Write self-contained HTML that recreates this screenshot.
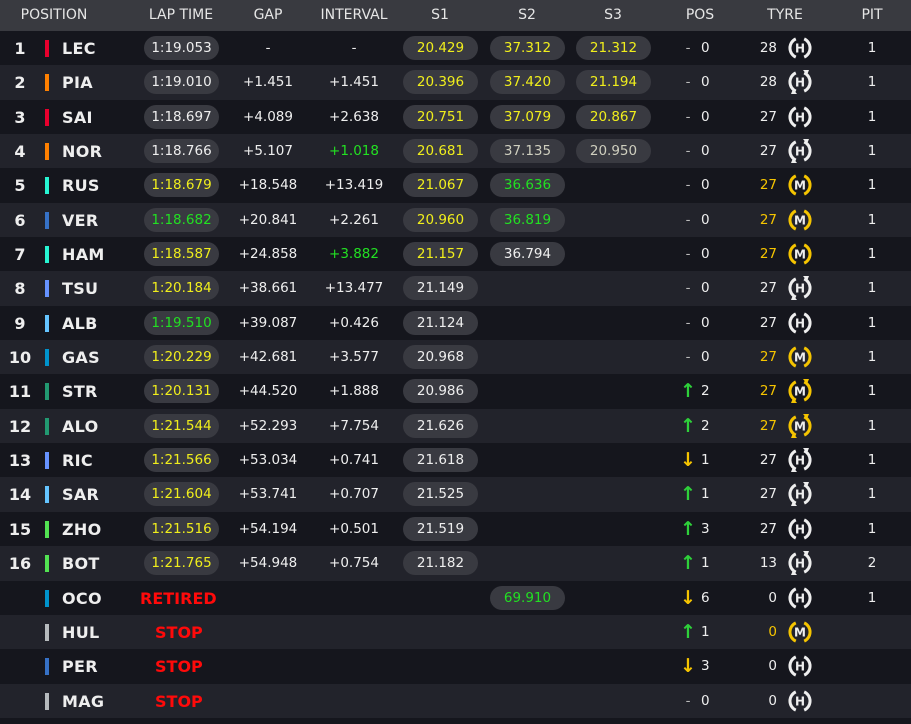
<!DOCTYPE html>
<html><head><meta charset="utf-8"><style>
*{margin:0;padding:0;box-sizing:border-box}
body{width:911px;height:724px;background:#15161d;font-family:"DejaVu Sans","Liberation Sans",sans-serif;color:#eee;overflow:hidden;position:relative}
.h{height:31px;background:#393a40;position:relative;font-size:14px;color:#e6e6e6}
.h span{position:absolute;top:0;line-height:30px;text-align:center}
.r{height:34.35px;position:relative;font-size:13.5px}
.r:nth-child(even){background:#22232b}
.r:nth-child(odd){background:#15161d}
.r span{position:absolute;top:0;line-height:35px;white-space:nowrap}
.n{left:0;width:40px;text-align:center;font-weight:bold;font-size:16px}
.r span.b{left:45px;top:9px;width:4px;height:17px;line-height:0}
.c{left:62px;font-weight:bold;font-size:16px;letter-spacing:.3px}
.r span.p{top:5px;height:24px;line-height:24px;width:75px;border-radius:12px;background:#393a41;text-align:center}
.l{left:144px}.s1{left:403px}.s2{left:490px}.s3{left:576px}
.g{left:228px;width:80px;text-align:center}
.i{left:314px;width:80px;text-align:center}
.pd{left:680px;width:16px;text-align:center;color:#bbb}
.pn{left:701px}
.tn{left:740px;width:37px;text-align:right}
.pt{left:852px;width:40px;text-align:center}
.r svg{position:absolute;left:788px;top:5px;width:24px;height:24px}
.y{color:#f0ee1c}.gr{color:#22e022}.gy{color:#cfcfbf}.ty{color:#f5c400}
.r span.up{color:#2ed03a;font-weight:bold;font-size:19px}.r span.dn{color:#f5c400;font-weight:bold;font-size:19px}
.rt{left:140px;color:#ff0a0a;font-weight:bold;font-size:16px}
.st{left:155px;color:#ff0a0a;font-weight:bold;font-size:16px}
</style></head><body>
<div class="h"><span style="left:0;width:108px">POSITION</span><span style="left:141px;width:80px">LAP TIME</span><span style="left:238px;width:60px">GAP</span><span style="left:309px;width:90px">INTERVAL</span><span style="left:420px;width:40px">S1</span><span style="left:507px;width:40px">S2</span><span style="left:593px;width:40px">S3</span><span style="left:680px;width:40px">POS</span><span style="left:760px;width:50px">TYRE</span><span style="left:852px;width:40px">PIT</span></div>
<div id="rows">
<div class="r"><span class="n">1</span><span class="b" style="background:#e8002d"></span><span class="c">LEC</span><span class="p l">1:19.053</span><span class="g">-</span><span class="i">-</span><span class="p s1 y">20.429</span><span class="p s2 y">37.312</span><span class="p s3 y">21.312</span><span class="pd">-</span><span class="pn">0</span><span class="tn">28</span><svg viewBox="0 0 24 24"><path d="M7.8 2.9A10 10 0 0 0 7.8 21.1M16.2 2.9A10 10 0 0 1 16.2 21.1" fill="none" stroke="#eee" stroke-width="3"/><text x="12" y="16.4" font-size="12" font-weight="bold" fill="#eee" text-anchor="middle" font-family="DejaVu Sans">H</text></svg><span class="pt">1</span></div>
<div class="r"><span class="n">2</span><span class="b" style="background:#ff8000"></span><span class="c">PIA</span><span class="p l">1:19.010</span><span class="g">+1.451</span><span class="i">+1.451</span><span class="p s1 y">20.396</span><span class="p s2 y">37.420</span><span class="p s3 y">21.194</span><span class="pd">-</span><span class="pn">0</span><span class="tn">28</span><svg viewBox="0 0 24 24"><path d="M7.8 2.9A10 10 0 0 0 7.8 21.1M16.2 2.9A10 10 0 0 1 16.2 21.1" fill="none" stroke="#eee" stroke-width="3"/><path d="M15 0h6l-2 5zM9 24H3l2-5z" fill="#eee"/><text x="12" y="16.4" font-size="12" font-weight="bold" fill="#eee" text-anchor="middle" font-family="DejaVu Sans">H</text></svg><span class="pt">1</span></div>
<div class="r"><span class="n">3</span><span class="b" style="background:#e8002d"></span><span class="c">SAI</span><span class="p l">1:18.697</span><span class="g">+4.089</span><span class="i">+2.638</span><span class="p s1 y">20.751</span><span class="p s2 y">37.079</span><span class="p s3 y">20.867</span><span class="pd">-</span><span class="pn">0</span><span class="tn">27</span><svg viewBox="0 0 24 24"><path d="M7.8 2.9A10 10 0 0 0 7.8 21.1M16.2 2.9A10 10 0 0 1 16.2 21.1" fill="none" stroke="#eee" stroke-width="3"/><text x="12" y="16.4" font-size="12" font-weight="bold" fill="#eee" text-anchor="middle" font-family="DejaVu Sans">H</text></svg><span class="pt">1</span></div>
<div class="r"><span class="n">4</span><span class="b" style="background:#ff8000"></span><span class="c">NOR</span><span class="p l">1:18.766</span><span class="g">+5.107</span><span class="i gr">+1.018</span><span class="p s1 y">20.681</span><span class="p s2 gy">37.135</span><span class="p s3 gy">20.950</span><span class="pd">-</span><span class="pn">0</span><span class="tn">27</span><svg viewBox="0 0 24 24"><path d="M7.8 2.9A10 10 0 0 0 7.8 21.1M16.2 2.9A10 10 0 0 1 16.2 21.1" fill="none" stroke="#eee" stroke-width="3"/><path d="M15 0h6l-2 5zM9 24H3l2-5z" fill="#eee"/><text x="12" y="16.4" font-size="12" font-weight="bold" fill="#eee" text-anchor="middle" font-family="DejaVu Sans">H</text></svg><span class="pt">1</span></div>
<div class="r"><span class="n">5</span><span class="b" style="background:#27f4d2"></span><span class="c">RUS</span><span class="p l y">1:18.679</span><span class="g">+18.548</span><span class="i">+13.419</span><span class="p s1 y">21.067</span><span class="p s2 gr">36.636</span><span class="pd">-</span><span class="pn">0</span><span class="tn ty">27</span><svg viewBox="0 0 24 24"><path d="M7.8 2.9A10 10 0 0 0 7.8 21.1M16.2 2.9A10 10 0 0 1 16.2 21.1" fill="none" stroke="#f5c400" stroke-width="3"/><text x="12" y="16.4" font-size="12" font-weight="bold" fill="#eee" text-anchor="middle" font-family="DejaVu Sans">M</text></svg><span class="pt">1</span></div>
<div class="r"><span class="n">6</span><span class="b" style="background:#3671c6"></span><span class="c">VER</span><span class="p l gr">1:18.682</span><span class="g">+20.841</span><span class="i">+2.261</span><span class="p s1 y">20.960</span><span class="p s2 gr">36.819</span><span class="pd">-</span><span class="pn">0</span><span class="tn ty">27</span><svg viewBox="0 0 24 24"><path d="M7.8 2.9A10 10 0 0 0 7.8 21.1M16.2 2.9A10 10 0 0 1 16.2 21.1" fill="none" stroke="#f5c400" stroke-width="3"/><text x="12" y="16.4" font-size="12" font-weight="bold" fill="#eee" text-anchor="middle" font-family="DejaVu Sans">M</text></svg><span class="pt">1</span></div>
<div class="r"><span class="n">7</span><span class="b" style="background:#27f4d2"></span><span class="c">HAM</span><span class="p l y">1:18.587</span><span class="g">+24.858</span><span class="i gr">+3.882</span><span class="p s1 y">21.157</span><span class="p s2">36.794</span><span class="pd">-</span><span class="pn">0</span><span class="tn ty">27</span><svg viewBox="0 0 24 24"><path d="M7.8 2.9A10 10 0 0 0 7.8 21.1M16.2 2.9A10 10 0 0 1 16.2 21.1" fill="none" stroke="#f5c400" stroke-width="3"/><text x="12" y="16.4" font-size="12" font-weight="bold" fill="#eee" text-anchor="middle" font-family="DejaVu Sans">M</text></svg><span class="pt">1</span></div>
<div class="r"><span class="n">8</span><span class="b" style="background:#6692ff"></span><span class="c">TSU</span><span class="p l y">1:20.184</span><span class="g">+38.661</span><span class="i">+13.477</span><span class="p s1">21.149</span><span class="pd">-</span><span class="pn">0</span><span class="tn">27</span><svg viewBox="0 0 24 24"><path d="M7.8 2.9A10 10 0 0 0 7.8 21.1M16.2 2.9A10 10 0 0 1 16.2 21.1" fill="none" stroke="#eee" stroke-width="3"/><path d="M15 0h6l-2 5zM9 24H3l2-5z" fill="#eee"/><text x="12" y="16.4" font-size="12" font-weight="bold" fill="#eee" text-anchor="middle" font-family="DejaVu Sans">H</text></svg><span class="pt">1</span></div>
<div class="r"><span class="n">9</span><span class="b" style="background:#64c4ff"></span><span class="c">ALB</span><span class="p l gr">1:19.510</span><span class="g">+39.087</span><span class="i">+0.426</span><span class="p s1">21.124</span><span class="pd">-</span><span class="pn">0</span><span class="tn">27</span><svg viewBox="0 0 24 24"><path d="M7.8 2.9A10 10 0 0 0 7.8 21.1M16.2 2.9A10 10 0 0 1 16.2 21.1" fill="none" stroke="#eee" stroke-width="3"/><text x="12" y="16.4" font-size="12" font-weight="bold" fill="#eee" text-anchor="middle" font-family="DejaVu Sans">H</text></svg><span class="pt">1</span></div>
<div class="r"><span class="n">10</span><span class="b" style="background:#0093cc"></span><span class="c">GAS</span><span class="p l y">1:20.229</span><span class="g">+42.681</span><span class="i">+3.577</span><span class="p s1">20.968</span><span class="pd">-</span><span class="pn">0</span><span class="tn ty">27</span><svg viewBox="0 0 24 24"><path d="M7.8 2.9A10 10 0 0 0 7.8 21.1M16.2 2.9A10 10 0 0 1 16.2 21.1" fill="none" stroke="#f5c400" stroke-width="3"/><text x="12" y="16.4" font-size="12" font-weight="bold" fill="#eee" text-anchor="middle" font-family="DejaVu Sans">M</text></svg><span class="pt">1</span></div>
<div class="r"><span class="n">11</span><span class="b" style="background:#229971"></span><span class="c">STR</span><span class="p l y">1:20.131</span><span class="g">+44.520</span><span class="i">+1.888</span><span class="p s1">20.986</span><span class="pd up">↑</span><span class="pn">2</span><span class="tn ty">27</span><svg viewBox="0 0 24 24"><path d="M7.8 2.9A10 10 0 0 0 7.8 21.1M16.2 2.9A10 10 0 0 1 16.2 21.1" fill="none" stroke="#f5c400" stroke-width="3"/><path d="M15 0h6l-2 5zM9 24H3l2-5z" fill="#f5c400"/><text x="12" y="16.4" font-size="12" font-weight="bold" fill="#eee" text-anchor="middle" font-family="DejaVu Sans">M</text></svg><span class="pt">1</span></div>
<div class="r"><span class="n">12</span><span class="b" style="background:#229971"></span><span class="c">ALO</span><span class="p l y">1:21.544</span><span class="g">+52.293</span><span class="i">+7.754</span><span class="p s1">21.626</span><span class="pd up">↑</span><span class="pn">2</span><span class="tn ty">27</span><svg viewBox="0 0 24 24"><path d="M7.8 2.9A10 10 0 0 0 7.8 21.1M16.2 2.9A10 10 0 0 1 16.2 21.1" fill="none" stroke="#f5c400" stroke-width="3"/><path d="M15 0h6l-2 5zM9 24H3l2-5z" fill="#f5c400"/><text x="12" y="16.4" font-size="12" font-weight="bold" fill="#eee" text-anchor="middle" font-family="DejaVu Sans">M</text></svg><span class="pt">1</span></div>
<div class="r"><span class="n">13</span><span class="b" style="background:#6692ff"></span><span class="c">RIC</span><span class="p l y">1:21.566</span><span class="g">+53.034</span><span class="i">+0.741</span><span class="p s1">21.618</span><span class="pd dn">↓</span><span class="pn">1</span><span class="tn">27</span><svg viewBox="0 0 24 24"><path d="M7.8 2.9A10 10 0 0 0 7.8 21.1M16.2 2.9A10 10 0 0 1 16.2 21.1" fill="none" stroke="#eee" stroke-width="3"/><path d="M15 0h6l-2 5zM9 24H3l2-5z" fill="#eee"/><text x="12" y="16.4" font-size="12" font-weight="bold" fill="#eee" text-anchor="middle" font-family="DejaVu Sans">H</text></svg><span class="pt">1</span></div>
<div class="r"><span class="n">14</span><span class="b" style="background:#64c4ff"></span><span class="c">SAR</span><span class="p l y">1:21.604</span><span class="g">+53.741</span><span class="i">+0.707</span><span class="p s1">21.525</span><span class="pd up">↑</span><span class="pn">1</span><span class="tn">27</span><svg viewBox="0 0 24 24"><path d="M7.8 2.9A10 10 0 0 0 7.8 21.1M16.2 2.9A10 10 0 0 1 16.2 21.1" fill="none" stroke="#eee" stroke-width="3"/><path d="M15 0h6l-2 5zM9 24H3l2-5z" fill="#eee"/><text x="12" y="16.4" font-size="12" font-weight="bold" fill="#eee" text-anchor="middle" font-family="DejaVu Sans">H</text></svg><span class="pt">1</span></div>
<div class="r"><span class="n">15</span><span class="b" style="background:#52e252"></span><span class="c">ZHO</span><span class="p l y">1:21.516</span><span class="g">+54.194</span><span class="i">+0.501</span><span class="p s1">21.519</span><span class="pd up">↑</span><span class="pn">3</span><span class="tn">27</span><svg viewBox="0 0 24 24"><path d="M7.8 2.9A10 10 0 0 0 7.8 21.1M16.2 2.9A10 10 0 0 1 16.2 21.1" fill="none" stroke="#eee" stroke-width="3"/><text x="12" y="16.4" font-size="12" font-weight="bold" fill="#eee" text-anchor="middle" font-family="DejaVu Sans">H</text></svg><span class="pt">1</span></div>
<div class="r"><span class="n">16</span><span class="b" style="background:#52e252"></span><span class="c">BOT</span><span class="p l y">1:21.765</span><span class="g">+54.948</span><span class="i">+0.754</span><span class="p s1">21.182</span><span class="pd up">↑</span><span class="pn">1</span><span class="tn">13</span><svg viewBox="0 0 24 24"><path d="M7.8 2.9A10 10 0 0 0 7.8 21.1M16.2 2.9A10 10 0 0 1 16.2 21.1" fill="none" stroke="#eee" stroke-width="3"/><path d="M15 0h6l-2 5zM9 24H3l2-5z" fill="#eee"/><text x="12" y="16.4" font-size="12" font-weight="bold" fill="#eee" text-anchor="middle" font-family="DejaVu Sans">H</text></svg><span class="pt">2</span></div>
<div class="r"><span class="b" style="background:#0093cc"></span><span class="c">OCO</span><span class="rt">RETIRED</span><span class="p s2 gr">69.910</span><span class="pd dn">↓</span><span class="pn">6</span><span class="tn">0</span><svg viewBox="0 0 24 24"><path d="M7.8 2.9A10 10 0 0 0 7.8 21.1M16.2 2.9A10 10 0 0 1 16.2 21.1" fill="none" stroke="#eee" stroke-width="3"/><text x="12" y="16.4" font-size="12" font-weight="bold" fill="#eee" text-anchor="middle" font-family="DejaVu Sans">H</text></svg><span class="pt">1</span></div>
<div class="r"><span class="b" style="background:#b6babd"></span><span class="c">HUL</span><span class="st">STOP</span><span class="pd up">↑</span><span class="pn">1</span><span class="tn ty">0</span><svg viewBox="0 0 24 24"><path d="M7.8 2.9A10 10 0 0 0 7.8 21.1M16.2 2.9A10 10 0 0 1 16.2 21.1" fill="none" stroke="#f5c400" stroke-width="3"/><text x="12" y="16.4" font-size="12" font-weight="bold" fill="#eee" text-anchor="middle" font-family="DejaVu Sans">M</text></svg></div>
<div class="r"><span class="b" style="background:#3671c6"></span><span class="c">PER</span><span class="st">STOP</span><span class="pd dn">↓</span><span class="pn">3</span><span class="tn">0</span><svg viewBox="0 0 24 24"><path d="M7.8 2.9A10 10 0 0 0 7.8 21.1M16.2 2.9A10 10 0 0 1 16.2 21.1" fill="none" stroke="#eee" stroke-width="3"/><text x="12" y="16.4" font-size="12" font-weight="bold" fill="#eee" text-anchor="middle" font-family="DejaVu Sans">H</text></svg></div>
<div class="r"><span class="b" style="background:#b6babd"></span><span class="c">MAG</span><span class="st">STOP</span><span class="pd">-</span><span class="pn">0</span><span class="tn">0</span><svg viewBox="0 0 24 24"><path d="M7.8 2.9A10 10 0 0 0 7.8 21.1M16.2 2.9A10 10 0 0 1 16.2 21.1" fill="none" stroke="#eee" stroke-width="3"/><text x="12" y="16.4" font-size="12" font-weight="bold" fill="#eee" text-anchor="middle" font-family="DejaVu Sans">H</text></svg></div>
</div>
</body></html>
